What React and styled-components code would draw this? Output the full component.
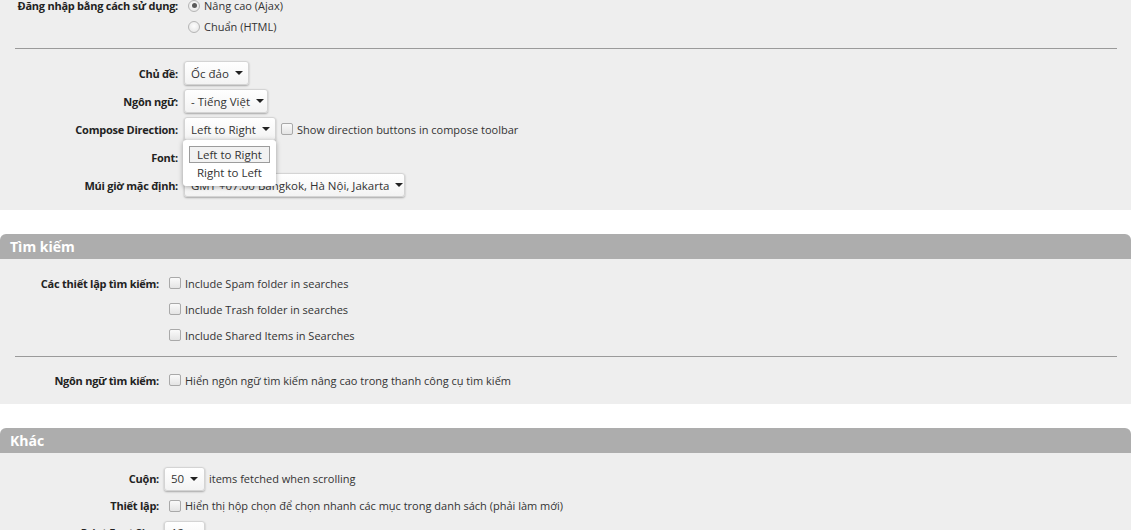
import styled, { createGlobalStyle } from "styled-components";

const GlobalStyle = createGlobalStyle`
  html, body {
    margin: 0;
    padding: 0;
    background: #ffffff;
    overflow: hidden;
  }
  body {
    font-family: "Open Sans", "Noto Sans", sans-serif;
    font-size: 11px;
    color: #333;
  }
`;

const Page = styled.div`
  width: 1131px;
  height: 530px;
  overflow: hidden;
`;

const Scroller = styled.div`
  margin-top: -5px;
  display: flex;
  flex-direction: column;
  gap: 24px;
`;

const Section = styled.section`
  display: flex;
  flex-direction: column;
`;

const SectionHeader = styled.div`
  height: 25px;
  display: flex;
  align-items: center;
  padding-left: 10px;
  background: #adadad;
  border-radius: 6px 6px 0 0;
  color: #fff;
  font-weight: 700;
  font-size: 14px;
`;

const SectionBody = styled.div`
  background: #eeeeee;
  padding: ${({ $pad }) => $pad || "0 0 11px"};
`;

const Row = styled.div`
  display: grid;
  grid-template-columns: ${({ $labelW }) => $labelW}px 1fr;
  column-gap: ${({ $gap }) => $gap}px;
  align-items: center;
  height: ${({ $h }) => $h}px;
`;

const Label = styled.div`
  text-align: right;
  font-weight: 700;
  letter-spacing: -0.25px;
  color: #222;
  white-space: nowrap;
`;

const Controls = styled.div`
  display: flex;
  align-items: center;
  gap: 4px;
  white-space: nowrap;
`;

const Divider = styled.hr`
  border: 0;
  border-top: 1px solid #9a9a9a;
  margin: ${({ $m }) => $m};
`;

const Radio = styled.span`
  box-sizing: border-box;
  width: 12px;
  height: 12px;
  margin-left: 4px;
  border-radius: 50%;
  border: 1px solid #b5b5b5;
  background: radial-gradient(circle at 50% 40%, #fdfdfd, #e2e2e2);
  display: inline-flex;
  align-items: center;
  justify-content: center;
  &::after {
    content: "";
    width: 5px;
    height: 5px;
    border-radius: 50%;
    background: ${({ $on }) => ($on ? "#5a5a5a" : "transparent")};
  }
`;

const Check = styled.span`
  box-sizing: border-box;
  width: 12px;
  height: 12px;
  margin-left: ${({ $ml }) => ($ml === undefined ? 5 : $ml)}px;
  border-radius: 2px;
  border: 1px solid #a9a9a9;
  background: linear-gradient(#fafafa, #e4e4e4);
`;

const Option = styled.span`
  color: #333;
`;

const SelectWrap = styled.div`
  position: relative;
  display: flex;
`;

const Select = styled.div`
  box-sizing: border-box;
  height: 24px;
  width: ${({ $w }) => $w}px;
  display: flex;
  align-items: center;
  justify-content: space-between;
  padding: 0 7px 0 6px;
  background: linear-gradient(#ffffff, #f3f3f3);
  border: 1px solid #d4d4d4;
  border-radius: 3px;
  box-shadow: 0 1px 2px rgba(0, 0, 0, 0.3);
  color: #333;
  font-size: 11.5px;
  overflow: hidden;
  white-space: nowrap;
`;

const Caret = styled.span`
  width: 0;
  height: 0;
  flex-shrink: 0;
  border-left: 4px solid transparent;
  border-right: 4px solid transparent;
  border-top: 4px solid #222;
  margin-left: 6px;
`;

const Menu = styled.div`
  position: absolute;
  left: -1px;
  top: 23px;
  width: 93px;
  box-sizing: border-box;
  padding: 6px 6px 5px;
  background: #fff;
  border-radius: 3px;
  box-shadow: 0 1px 5px rgba(0, 0, 0, 0.35);
  z-index: 2;
  display: flex;
  flex-direction: column;
  gap: 1px;
`;

const MenuItem = styled.div`
  box-sizing: border-box;
  height: 17px;
  display: flex;
  align-items: center;
  padding-left: 7px;
  border: 1px solid ${({ $active }) => ($active ? "#9c9c9c" : "transparent")};
  background: ${({ $active }) => ($active ? "#f2f2f2" : "transparent")};
  color: #333;
  font-size: 11.5px;
  white-space: nowrap;
`;

const SelectField = ({ w, children }) => (
  <Select $w={w}>
    <span>{children}</span>
    <Caret />
  </Select>
);

export default function App() {
  return (
    <>
      <GlobalStyle />
      <Page>
        <Scroller>
          <Section>
            <SectionBody>
              <Row $labelW={178} $gap={6} $h={21}>
                <Label>Đăng nhập bằng cách sử dụng:</Label>
                <Controls>
                  <Radio $on />
                  <Option>Nâng cao (Ajax)</Option>
                </Controls>
              </Row>
              <Row $labelW={178} $gap={6} $h={21}>
                <span />
                <Controls>
                  <Radio />
                  <Option>Chuẩn (HTML)</Option>
                </Controls>
              </Row>
              <Divider $m="11px 14px 10px 15px" />
              <Row $labelW={178} $gap={6} $h={28}>
                <Label>Chủ đề:</Label>
                <Controls>
                  <SelectField w={65}>Ốc đảo</SelectField>
                </Controls>
              </Row>
              <Row $labelW={178} $gap={6} $h={28}>
                <Label>Ngôn ngữ:</Label>
                <Controls>
                  <SelectField w={84}>- Tiếng Việt</SelectField>
                </Controls>
              </Row>
              <Row $labelW={178} $gap={6} $h={28}>
                <Label>Compose Direction:</Label>
                <Controls>
                  <SelectWrap>
                    <SelectField w={92}>Left to Right</SelectField>
                    <Menu>
                      <MenuItem $active>Left to Right</MenuItem>
                      <MenuItem>Right to Left</MenuItem>
                    </Menu>
                  </SelectWrap>
                  <Check $ml={1} />
                  <Option>Show direction buttons in compose toolbar</Option>
                </Controls>
              </Row>
              <Row $labelW={178} $gap={6} $h={28}>
                <Label>Font:</Label>
                <Controls />
              </Row>
              <Row $labelW={178} $gap={6} $h={28}>
                <Label>Múi giờ mặc định:</Label>
                <Controls>
                  <SelectField w={221}>GMT +07.00 Bangkok, Hà Nội, Jakarta</SelectField>
                </Controls>
              </Row>
            </SectionBody>
          </Section>

          <Section>
            <SectionHeader>Tìm kiếm</SectionHeader>
            <SectionBody $pad="11px 0 11px">
              <Row $labelW={159} $gap={5} $h={26}>
                <Label>Các thiết lập tìm kiếm:</Label>
                <Controls>
                  <Check />
                  <Option>Include Spam folder in searches</Option>
                </Controls>
              </Row>
              <Row $labelW={159} $gap={5} $h={26}>
                <span />
                <Controls>
                  <Check />
                  <Option>Include Trash folder in searches</Option>
                </Controls>
              </Row>
              <Row $labelW={159} $gap={5} $h={26}>
                <span />
                <Controls>
                  <Check />
                  <Option>Include Shared Items in Searches</Option>
                </Controls>
              </Row>
              <Divider $m="8px 14px 10px 15px" />
              <Row $labelW={159} $gap={5} $h={26}>
                <Label>Ngôn ngữ tìm kiếm:</Label>
                <Controls>
                  <Check />
                  <Option>Hiển ngôn ngữ tìm kiếm nâng cao trong thanh công cụ tìm kiếm</Option>
                </Controls>
              </Row>
            </SectionBody>
          </Section>

          <Section>
            <SectionHeader>Khác</SectionHeader>
            <SectionBody $pad="12px 0 10px">
              <Row $labelW={159} $gap={5} $h={27}>
                <Label>Cuộn:</Label>
                <Controls>
                  <SelectField w={41}>50</SelectField>
                  <Option>items fetched when scrolling</Option>
                </Controls>
              </Row>
              <Row $labelW={159} $gap={5} $h={27}>
                <Label>Thiết lập:</Label>
                <Controls>
                  <Check />
                  <Option>Hiển thị hộp chọn để chọn nhanh các mục trong danh sách (phải làm mới)</Option>
                </Controls>
              </Row>
              <Row $labelW={159} $gap={5} $h={27}>
                <Label>Print Font Size:</Label>
                <Controls>
                  <SelectField w={41}>12</SelectField>
                </Controls>
              </Row>
            </SectionBody>
          </Section>
        </Scroller>
      </Page>
    </>
  );
}
